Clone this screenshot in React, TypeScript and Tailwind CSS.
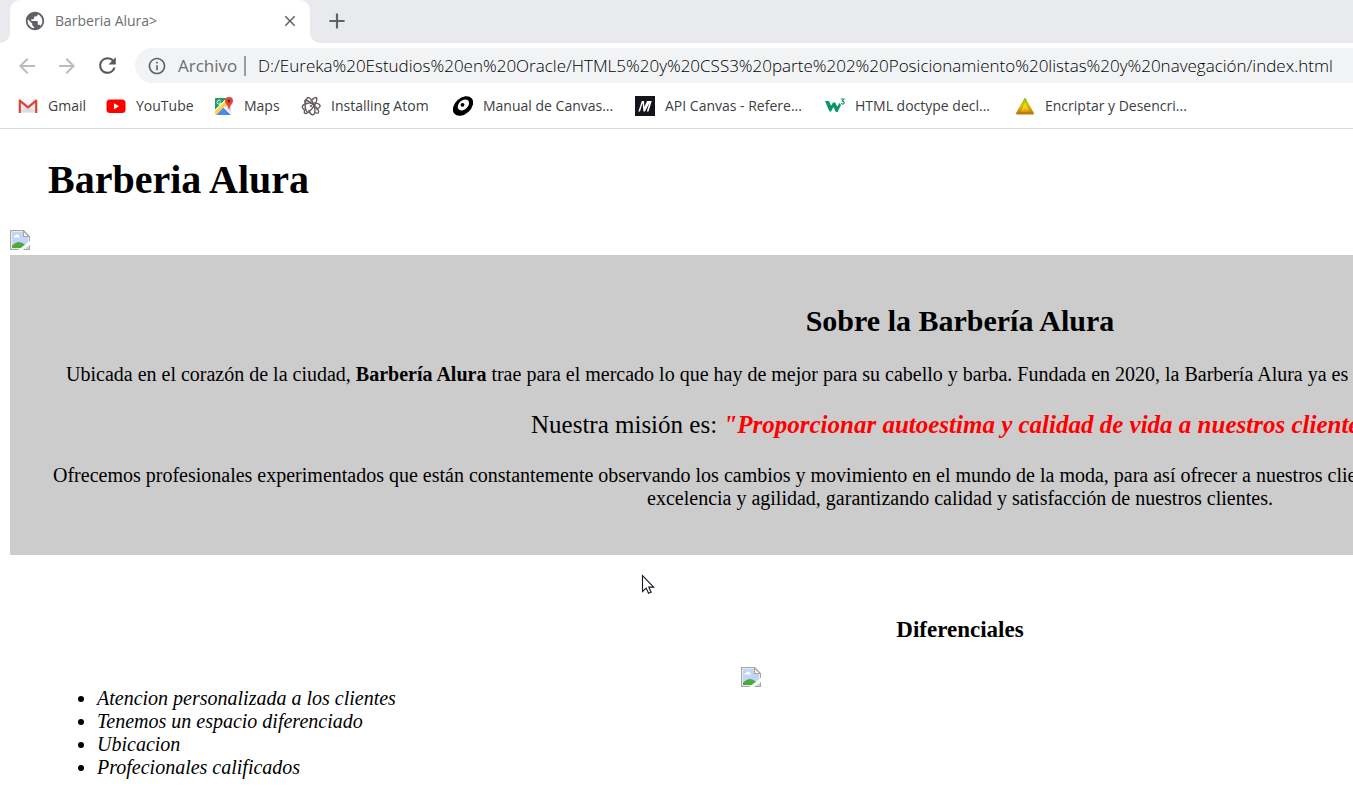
import type { ReactNode } from 'react';
import { MdAdd, MdArrowBack, MdArrowForward, MdClose, MdInfoOutline, MdPublic, MdRefresh } from 'react-icons/md';

const GmailIcon = () => (
  <svg viewBox="0 0 20 20" className="size-5">
    <path d="M1 3.5h18V17H1z" fill="#e9e9e9" />
    <path d="M3 16l7-6 7 6z" fill="#dcdcdc" />
    <path d="M3 4h14l-7 6z" fill="#f7f7f7" />
    <path d="M1.8 17V4.6L10 11.4l8.2-6.8V17" fill="none" stroke="#d9453a" strokeWidth="2.2" strokeLinejoin="round" />
  </svg>
);

const YouTubeIcon = () => (
  <svg viewBox="0 0 20 20" className="size-5">
    <rect x="0.5" y="3.5" width="19" height="13.5" rx="3.5" fill="#f00" />
    <path d="M8 7.2v6l5.2-3z" fill="#fff" />
  </svg>
);

const MapsIcon = () => (
  <svg viewBox="0 0 20 20" className="size-5">
    <path d="M2 2h15v15q0 2-2 2H3q-2 0-2-2V3q0-1 1-1z" fill="#e3e3e3" />
    <path d="M2 2h13L1 16V3q0-1 1-1z" fill="#1da261" />
    <path d="M1 14L13 2h3v4L3 19q-2 0-2-2z" fill="#fbd249" />
    <path d="M1 13.800L12.800 2h1.400L1 15.200z" fill="#fff" />
    <path d="M9.500 11.500L17 19H2.500z" fill="#4a89f3" />
    <path d="M9.500 11.500l.9-.9L17 17.500q0 .9-.4 1.100z" fill="#fff" />
    <path d="M15 1a4 4 0 0 1 4 4c0 3-3.300 4-3.700 8.500h-.6C14.300 9 11 8 11 5a4 4 0 0 1 4-4z" fill="#e0463b" />
    <circle cx="15" cy="5" r="1.500" fill="#7c251d" />
    <path d="M6.800 5.200A2 2 0 1 0 7 7H5.300" fill="none" stroke="#fff" strokeWidth="0.9" />
  </svg>
);

const AtomIcon = () => (
  <svg viewBox="0 0 20 20" className="size-5" fill="none" stroke="#66595b" strokeWidth="1.400" strokeLinecap="round">
    <path d="M6.500 16.500C3 13 3.500 4 6.800 1.600c2.200-1 5.200 4.400 6.700 9.400 1.200 4.500.2 8-2 7.800-1.700-.3-3-2.300-3.500-4.300" />
    <path d="M3 13.500C.5 11.500.5 9.500 4 8c4.500-1.600 11-1.500 13.800 0 2.500 1.700 1 4-2.300 4.700" />
    <path d="M5 7.500C2.800 4.500 3.500 3.500 6 4.500c4 1.700 9.500 6.500 11.300 9.800 1.200 2.700-.5 3.700-3.300 2.200" />
    <path d="M10.500 4.500C12.500 1.800 15 .8 15.800 2.300c.8 2.300-2.300 8-6 11.700-2.800 2.800-5.800 4.500-6.500 2.800-.4-1 .2-2.600 1.400-4.500" />
    <circle cx="10" cy="10" r="0.900" fill="#66595b" strokeWidth="0.500" />
  </svg>
);

const CanvasIcon = () => (
  <svg viewBox="0 0 20 20" className="size-5">
    <g transform="rotate(-42 10 10)">
      <ellipse cx="10" cy="10" rx="11.600" ry="8" fill="#000" />
      <ellipse cx="11" cy="9.500" rx="6.500" ry="4.500" fill="#fff" />
    </g>
    <circle cx="9.500" cy="8.800" r="1.900" fill="#000" />
  </svg>
);

const MdnIcon = () => (
  <svg viewBox="0 0 20 20" className="size-5">
    <rect width="20" height="20" fill="#15141a" />
    <path d="M3.400 15.500L6.800 5H9l.4 6L12 5h4.700l-3.200 10.500h-1.700L14.300 7 10 15.500H8.400L7.600 7 5 15.500z" fill="#fff" />
  </svg>
);

const SchoolsIcon = () => (
  <svg viewBox="0 0 20 20" className="size-5">
    <path d="M0 5h4l2 4.800L8 6.500h2.200l2 4.300L14.500 7l1.500 2-3.500 7h-1.700l-2.300-5-2.500 4.500H4.500z" fill="#059862" />
    <path d="M15.800 3h3.100l-1.600 2.100q1.900.1 1.900 1.500 0 1.500-1.500 1.500-1.200 0-1.700-.8" fill="none" stroke="#059862" strokeWidth="1.100" />
  </svg>
);

const PyramidIcon = () => (
  <svg viewBox="0 0 20 20" className="size-5">
    <defs>
      <linearGradient id="pyramid" x1="0" y1="0" x2="0" y2="1">
        <stop offset="0" stopColor="#62bd18" />
        <stop offset="0.250" stopColor="#b7c80b" />
        <stop offset="0.500" stopColor="#e6b20c" />
        <stop offset="1" stopColor="#b87908" />
      </linearGradient>
    </defs>
    <path d="M9.300 2.500q.7-1 1.400 0L19 17q0 1.500-1 1.500H2q-1 0-1-1.500z" fill="url(#pyramid)" />
    <path d="M10 6l4 10H6z" fill="#ffdc24" opacity="0.75" />
    <path d="M1.500 17.500L10 13l8.500 4.500z" fill="#b46f08" opacity="0.45" />
  </svg>
);

const BrokenImage = () => (
  <svg viewBox="0 0 20 20" className="block size-5" role="img" aria-label="Imagen">
    <path d="M.6.600h13L19.400 6.500v12.900H.6z" fill="#fff" stroke="#a6a6a6" strokeWidth="1.200" />
    <path d="M2 2h11l5 5v11H2z" fill="#c2d5f7" />
    <path d="M3.500 7.600a1.500 1.500 0 0 1 1.500-1.500 2 2 0 0 1 3.900-.2A1.700 1.700 0 0 1 10 7.600z" fill="#fff" />
    <path d="M2 18v-2.200Q8.500 8.500 15 14.800l3 3.200z" fill="#4ba93d" />
    <path d="M13.500 1v5.500h5.600z" fill="#fff" stroke="#a6a6a6" strokeWidth="1.100" />
    <path d="M8.200 20L20 10.800V15l-6 5z" fill="#fff" />
    <path d="M13.500 19.400h5.900V15.500" fill="none" stroke="#a6a6a6" strokeWidth="1.200" />
  </svg>
);

const bookmarks: { label: string; icon: ReactNode }[] = [
  { label: 'Gmail', icon: <GmailIcon /> },
  { label: 'YouTube', icon: <YouTubeIcon /> },
  { label: 'Maps', icon: <MapsIcon /> },
  { label: 'Installing Atom', icon: <AtomIcon /> },
  { label: 'Manual de Canvas...', icon: <CanvasIcon /> },
  { label: 'API Canvas - Refere...', icon: <MdnIcon /> },
  { label: 'HTML doctype decl...', icon: <SchoolsIcon /> },
  { label: 'Encriptar y Desencri...', icon: <PyramidIcon /> },
];

const features = [
  'Atencion personalizada a los clientes',
  'Tenemos un espacio diferenciado',
  'Ubicacion',
  'Profecionales calificados',
];

function BrowserChrome() {
  return (
    <header className="border-b border-[#d9dbdd] font-['Open_Sans',sans-serif]">
      <div className="flex h-[43px] bg-[#e8eaed]">
        <div className="w-[10px] bg-white">
          <div className="h-full rounded-br-[10px] bg-[#e8eaed]" />
        </div>
        <div className="flex w-[300px] items-center rounded-t-[10px] bg-white pr-[11px] pb-[2px] pl-[14px]">
          <MdPublic className="size-[22px] text-[#5f6368]" />
          <span className="ml-[9px] flex-1 text-[14px] text-[#6b6e72]">Barberia Alura&gt;</span>
          <button aria-label="Cerrar pestaña" className="text-[#5f6368]">
            <MdClose className="size-[18px]" />
          </button>
        </div>
        <div className="flex-1 bg-white">
          <div className="flex h-full items-center rounded-bl-[10px] bg-[#e8eaed] pb-[2px] pl-[14px]">
            <button aria-label="Nueva pestaña" className="text-[#5f6368]">
              <MdAdd className="size-[26px]" />
            </button>
          </div>
        </div>
      </div>
      <div className="flex h-[45px] items-center pl-[15px]">
        <button aria-label="Atrás" className="mr-4 text-[#babcbe]"><MdArrowBack className="size-6" /></button>
        <button aria-label="Adelante" className="mr-4 text-[#babcbe]"><MdArrowForward className="size-6" /></button>
        <button aria-label="Recargar" className="mr-[15px] text-[#55595e]"><MdRefresh className="size-[25px]" /></button>
        <div className="flex h-[35px] min-w-0 flex-1 items-center rounded-l-full bg-[#f1f3f4] pl-[12px]">
          <MdInfoOutline className="size-5 shrink-0 text-[#5f6368]" />
          <label htmlFor="address" className="ml-[11px] w-[57px] shrink-0 text-[17px] text-[#6b6e72]">Archivo</label>
          <span className="ml-[9px] h-5 w-[2px] shrink-0 bg-[#9a9da1]" />
          <input
            id="address"
            type="text"
            defaultValue="D:/Eureka%20Estudios%20en%20Oracle/HTML5%20y%20CSS3%20parte%202%20Posicionamiento%20listas%20y%20navegación/index.html"
            className="ml-[12px] min-w-0 flex-1 bg-transparent text-[17px] font-light text-black outline-none"
          />
        </div>
      </div>
      <nav className="grid h-10 grid-cols-[88px_108px_87px_152px_182px_190px_190px_auto] items-center pb-[5px] pl-[18px]">
        {bookmarks.map(({ label, icon }) => (
          <a key={label} href="#" className="flex items-center gap-[10px] text-[14px] whitespace-nowrap text-[#3c4043]">
            {icon}
            {label}
          </a>
        ))}
      </nav>
    </header>
  );
}

export default function App() {
  return (
    <div className="min-h-screen overflow-hidden bg-white">
      <BrowserChrome />
      <main className="relative pl-[10px] font-['Liberation_Serif',serif] text-[20px] leading-[23px] text-black">
        <h1 className="pt-[28px] pl-[38px] text-[40px] leading-[46px] font-bold">Barberia Alura</h1>
        <div className="pt-[27px] pb-[5px]">
          <BrokenImage />
        </div>
        <section className="w-[1900px] bg-[#ccc] pt-12 pb-[45px] whitespace-nowrap">
          <h2 className="text-center text-[30px] leading-[35px] font-bold">Sobre la Barbería Alura</h2>
          <p className="mt-[25px] pl-[56px]">
            Ubicada en el corazón de la ciudad, <strong>Barbería Alura</strong> trae para el mercado lo que hay de mejor
            para su cabello y barba. Fundada en 2020, la Barbería Alura ya es
          </p>
          <p className="mt-6 pl-[521px] text-[25px] leading-[29px]">
            Nuestra misión es:{' '}
            <em className="font-bold text-[#f00]">"Proporcionar autoestima y calidad de vida a nuestros clientes"</em>
          </p>
          <p className="mt-[25px] pl-[43px]">
            Ofrecemos profesionales experimentados que están constantemente observando los cambios y movimiento en el
            mundo de la moda, para así ofrecer a nuestros clientes
          </p>
          <p className="text-center">excelencia y agilidad, garantizando calidad y satisfacción de nuestros clientes.</p>
        </section>
        <section className="w-[1900px] pt-[61px]">
          <h3 className="text-center text-[23px] leading-[27px] font-bold">Diferenciales</h3>
          <div className="mt-6 flex">
            <ul className="w-[731px] list-disc pt-5 pl-[87px] italic">
              {features.map((feature) => (
                <li key={feature}>{feature}</li>
              ))}
            </ul>
            <BrokenImage />
          </div>
        </section>
        <svg viewBox="0 0 14 22" className="absolute top-[445px] left-[641px] h-[22px] w-[14px]" aria-hidden="true">
          <path d="M1.500 1.500v16l3.700-3.400 2.300 5.200 2.600-1.100-2.300-5.100h4.900z" fill="#fff" stroke="#15151f" strokeWidth="1.100" />
        </svg>
      </main>
    </div>
  );
}
